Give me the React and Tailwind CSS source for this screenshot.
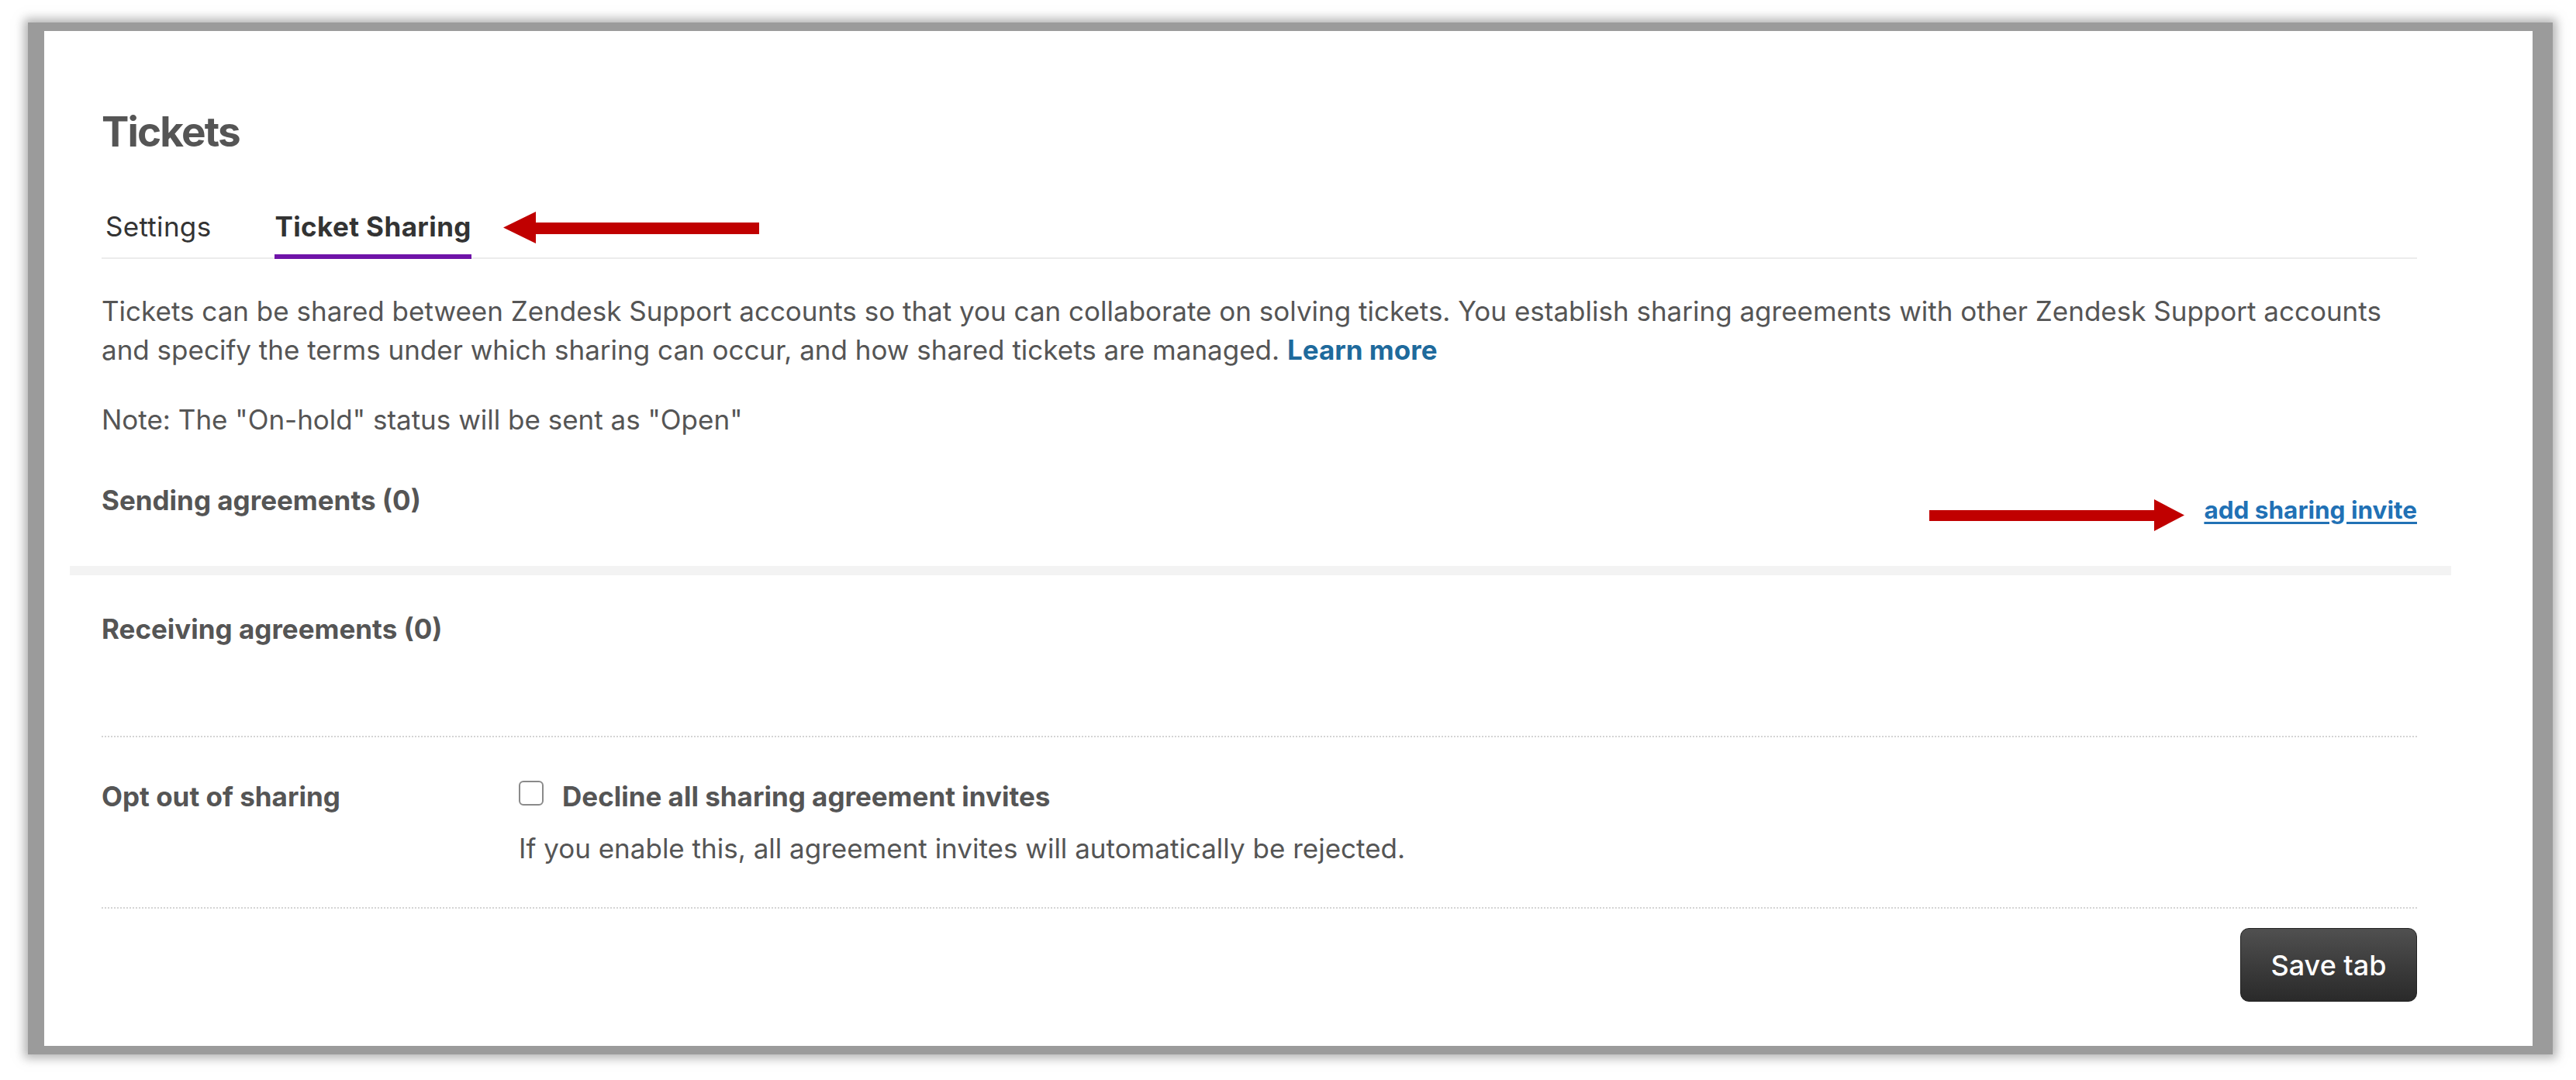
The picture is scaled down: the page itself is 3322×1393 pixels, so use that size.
import { useState } from 'react';

const font = { fontFamily: 'Inter, "Liberation Sans", sans-serif' };

function ArrowLeft() {
  return (
    <svg width="330" height="41" viewBox="0 0 330 41" className="shrink-0">
      <polygon points="0,20.5 42,0 42,14 330,14 330,29 42,29 42,41" fill="#c00000" />
    </svg>
  );
}

function ArrowRight() {
  return (
    <svg width="329" height="41" viewBox="0 0 329 41" className="shrink-0">
      <polygon points="329,20.5 290,0 290,14 0,14 0,28 290,28 290,41" fill="#c00000" />
    </svg>
  );
}

export default function App() {
  const [tab, setTab] = useState('sharing');
  const [optOut, setOptOut] = useState(false);

  return (
    <div className="min-h-screen bg-white pl-[36px] pt-[29px]" style={font}>
      {/* grey frame around the panel */}
      <div className="w-[3256px] bg-[#9b9b9b] pl-[21px] pt-[11px] pr-[26px] pb-[11px] shadow-[0_0_12px_5px_rgba(155,155,155,0.75)]">
        <div className="bg-white pl-[74px] pr-[149px] pt-[100px] pb-[57px] text-[#555]">
          <h1 className="text-[53px] leading-[60px] font-bold tracking-[-0.035em] text-[#555]">Tickets</h1>

          {/* tabs */}
          <div className="mt-[72px] flex items-start border-b-2 border-[#ececec]">
            <button
              onClick={() => setTab('settings')}
              className={`pb-[16px] pl-[5px] text-[35px] leading-[40px] tracking-[0.3px] text-[#333] ${tab === 'settings' ? 'font-bold border-b-[6px] border-[#6f13a8] -mb-[2px]' : ''}`}
            >
              Settings
            </button>
            <button
              onClick={() => setTab('sharing')}
              className={`ml-[82px] pb-[16px] text-[35px] leading-[40px] tracking-[0.4px] text-[#333] ${tab === 'sharing' ? 'font-bold border-b-[6px] border-[#6f13a8] -mb-[2px]' : ''}`}
            >
              Ticket Sharing
            </button>
            <div className="ml-[41px] mt-[1px]">
              <ArrowLeft />
            </div>
          </div>

          <p className="mt-[42px] text-[35px] leading-[50px]">
            Tickets can be shared between Zendesk Support accounts so that you can collaborate on solving tickets. You establish sharing agreements with other Zendesk Support accounts and specify the terms under which sharing can occur, and how shared tickets are managed.{' '}
            <a href="#" className="font-bold text-[#1e6a9c]">Learn more</a>
          </p>
          <p className="mt-[40px] text-[35px] leading-[50px]">Note: The "On-hold" status will be sent as "Open"</p>

          {/* sending agreements */}
          <div className="mt-[54px] flex items-start justify-between">
            <h2 className="text-[35px] leading-[50px] font-bold">Sending agreements (0)</h2>
            <div className="flex items-start">
              <div className="mt-[24px] mr-[25px]">
                <ArrowRight />
              </div>
              <a href="#" className="mt-[13px] text-[31.5px] leading-[50px] font-bold text-[#2171b5] underline underline-offset-[4px]">add sharing invite</a>
            </div>
          </div>

          <div className="mt-[45px] -ml-[41px] -mr-[44px] h-[12px] bg-[#f3f3f3]" />

          {/* receiving agreements */}
          <div className="mt-[44px] pb-[113px] border-b-2 border-dotted border-[#d4d4d4]">
            <h2 className="text-[35px] leading-[50px] font-bold">Receiving agreements (0)</h2>
          </div>

          {/* opt out */}
          <div className="mt-[51px] pb-[51px] flex items-start border-b-2 border-dotted border-[#d4d4d4]">
            <div className="w-[538px] shrink-0 text-[35px] leading-[50px] font-bold">Opt out of sharing</div>
            <div>
              <label className="flex items-start cursor-pointer">
                <input
                  type="checkbox"
                  checked={optOut}
                  onChange={(e) => setOptOut(e.target.checked)}
                  className="appearance-none mt-[5px] w-[32px] h-[32px] shrink-0 rounded-[6px] border-2 border-[#8a8a8a] bg-white checked:bg-[#1f73b7] checked:border-[#1f73b7]"
                />
                <span className="ml-[24px] text-[35px] leading-[50px] font-bold">Decline all sharing agreement invites</span>
              </label>
              <p className="mt-[17px] text-[35px] leading-[50px]">If you enable this, all agreement invites will automatically be rejected.</p>
            </div>
          </div>

          <div className="mt-[25px] flex justify-end">
            <button className="h-[95px] w-[228px] rounded-[11px] border border-[#222] bg-gradient-to-b from-[#505050] to-[#2a2a2a] text-[36px] font-medium text-white">
              Save tab
            </button>
          </div>
        </div>
      </div>
    </div>
  );
}
